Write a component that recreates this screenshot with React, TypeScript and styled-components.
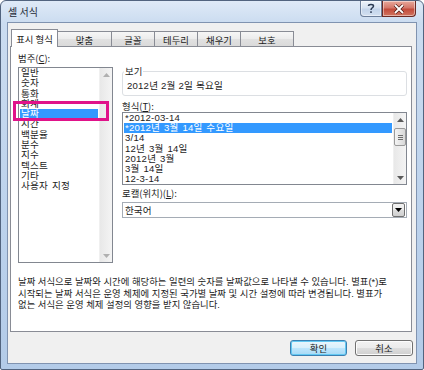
import React from "react";
import styled, { createGlobalStyle, css } from "styled-components";

const GlobalStyle = createGlobalStyle`
  html, body { margin: 0; padding: 0; background: #ffffff; }
  body {
    font-family: "Liberation Sans", "Noto Sans CJK KR", sans-serif;
    font-size: 9.4px;
    color: #1c1c1c;
  }
  * { box-sizing: border-box; }
`;

const Window = styled.div`
  width: 424px;
  height: 370px;
  display: flex;
  flex-direction: column;
  border: 1px solid #52647f;
  border-radius: 6px 6px 2px 2px;
  background: linear-gradient(180deg, #dfeaf7 0px, #cbdcf0 22px, #bcd2ec 60%, #b3cbe8 100%);
  padding: 0 6px 5px 6px;
`;

const TitleBar = styled.div`
  height: 21px;
  display: flex;
  align-items: flex-start;
  justify-content: space-between;
`;

const Title = styled.div`
  font-family: "Noto Sans CJK KR", sans-serif;
  font-size: 10px;
  line-height: 22px;
  color: #1e2a38;
  padding-left: 1px;
`;

const CaptionGroup = styled.div`
  display: flex;
  margin-right: 1px;
`;

const CaptionButton = styled.div<{ $close?: boolean }>`
  height: 16px;
  width: ${(p) => (p.$close ? "34px" : "22px")};
  display: flex;
  align-items: center;
  justify-content: center;
  border: 1px solid ${(p) => (p.$close ? "#6b2a24" : "#6d7f9a")};
  border-top: none;
  border-radius: ${(p) => (p.$close ? "0 0 4px 0" : "0 0 0 4px")};
  background: ${(p) =>
    p.$close
      ? "linear-gradient(180deg, #e9a99b 0%, #d4776a 45%, #c34b3b 55%, #d0745f 100%)"
      : "linear-gradient(180deg, #eef3fa 0%, #d6e2f1 45%, #c3d4ea 55%, #d3e0f0 100%)"};
  box-shadow: inset 0 0 0 1px rgba(255, 255, 255, 0.45);
`;

const Client = styled.div`
  flex: 1;
  display: flex;
  flex-direction: column;
  background: #f0f0f0;
  border: 1px solid #8093b0;
  padding: 6px 3px 0 2px;
`;

const TabRow = styled.div`
  display: flex;
  align-items: flex-end;
  height: 18px;
  padding-left: 1px;
  margin-bottom: -1px;
  position: relative;
  z-index: 2;
`;

const Tab = styled.div<{ $active?: boolean; $w: number }>`
  width: ${(p) => p.$w}px;
  display: flex;
  justify-content: center;
  font-family: "Noto Sans CJK KR", sans-serif;
  font-size: 9.4px;
  color: #1c1c1c;
  border: 1px solid #898c95;
  border-bottom: none;
  ${(p) =>
    p.$active
      ? css`
          height: 18px;
          background: #ffffff;
          padding-top: 4px;
          line-height: 11px;
        `
      : css`
          height: 15px;
          margin-bottom: 1px;
          margin-left: -1px;
          background: linear-gradient(180deg, #f6f6f6 0%, #ececec 50%, #e1e1e1 51%, #dadada 100%);
          padding-top: 3px;
          line-height: 11px;
        `}
`;

const Panel = styled.div`
  height: 286px;
  margin-right: 1px;
  background: #ffffff;
  border: 1px solid #898c95;
  padding: 6px 4px 0 7px;
  display: flex;
  flex-direction: column;
`;

const TopGrid = styled.div`
  display: grid;
  grid-template-columns: 95px 285px;
  column-gap: 9px;
`;

const Column = styled.div`
  display: flex;
  flex-direction: column;
`;

const FieldLabel = styled.div<{ $mt?: number }>`
  font-family: "Noto Sans CJK KR", sans-serif;
  font-size: 9.4px;
  line-height: 11px;
  height: 11px;
  margin-top: ${(p) => p.$mt ?? 0}px;
  color: #1c1c1c;
  u { text-decoration: underline; }
`;

const ListBox = styled.div<{ $h: number; $mt?: number }>`
  height: ${(p) => p.$h}px;
  margin-top: ${(p) => p.$mt ?? 0}px;
  border: 1px solid #828790;
  background: #ffffff;
  display: flex;
  position: relative;
`;

const Items = styled.div<{ $lh: number }>`
  flex: 1;
  padding: 0 1px;
  line-height: ${(p) => p.$lh}px;
  font-family: "Liberation Sans", "Noto Sans CJK KR", sans-serif;
  font-size: 9.6px;
  letter-spacing: 0.2px;
  word-spacing: 1px;
`;

const Item = styled.div<{ $sel?: boolean }>`
  padding-left: 1px;
  white-space: nowrap;
  color: ${(p) => (p.$sel ? "#ffffff" : "#1c1c1c")};
  background: ${(p) => (p.$sel ? "#3399ff" : "transparent")};
`;

const ScrollBar = styled.div`
  width: 13px;
  display: flex;
  flex-direction: column;
  background: linear-gradient(90deg, #e8e8e8 0%, #f4f4f4 100%);
  border-left: 1px solid #f0f0f0;
`;

const ScrollArrow = styled.div`
  height: 13px;
  display: flex;
  align-items: center;
  justify-content: center;
`;

const ScrollTrack = styled.div<{ $thumbTop?: number }>`
  flex: 1;
  display: flex;
  flex-direction: column;
  padding-top: ${(p) => p.$thumbTop ?? 0}px;
`;

const Thumb = styled.div`
  height: 18px;
  border: 1px solid #9a9a9a;
  border-radius: 2px;
  background: linear-gradient(90deg, #f4f4f4 0%, #e6e6e6 50%, #d8d8d8 100%);
  display: flex;
  flex-direction: column;
  align-items: center;
  justify-content: center;
  gap: 1px;
`;

const Grip = styled.div`
  width: 5px;
  height: 1px;
  background: #6e6e6e;
`;

const Highlight = styled.div`
  position: absolute;
  left: -6px;
  top: 33px;
  width: 96px;
  height: 20px;
  border: 3px solid #e0138a;
  pointer-events: none;
`;

const GroupBox = styled.div`
  margin-top: 18px;
  height: 25px;
  border: 1px solid #dcdfe3;
  border-radius: 3px;
  padding: 0 3px;
`;

const Legend = styled.div`
  width: fit-content;
  margin: -6px 0 0 -2px;
  padding: 0 1px;
  background: #ffffff;
  font-family: "Noto Sans CJK KR", sans-serif;
  font-size: 9.4px;
  line-height: 10px;
`;

const Preview = styled.div`
  margin-top: 4px;
  padding-left: 1px;
  line-height: 12px;
  font-size: 9.6px;
  letter-spacing: 0.2px;
  white-space: nowrap;
`;

const Combo = styled.div`
  margin-top: 3px;
  height: 16px;
  border: 1px solid #a5acb5;
  background: #ffffff;
  display: flex;
  align-items: center;
  padding: 0 1px 0 2px;
`;

const ComboText = styled.div`
  flex: 1;
  font-family: "Noto Sans CJK KR", sans-serif;
  font-size: 9.6px;
  line-height: 12px;
`;

const ComboButton = styled.div`
  width: 13px;
  height: 14px;
  border: 1px solid #707070;
  border-radius: 2px;
  background: linear-gradient(180deg, #f2f2f2 0%, #ebebeb 50%, #dddddd 51%, #cfcfcf 100%);
  display: flex;
  align-items: center;
  justify-content: center;
`;

const Description = styled.div`
  margin-top: 13px;
  font-family: "Liberation Sans", "Noto Sans CJK KR", sans-serif;
  font-size: 9.4px;
  line-height: 11.5px;
  color: #1c1c1c;
`;

const DescLine = styled.div`
  white-space: nowrap;
`;

const ButtonRow = styled.div`
  display: flex;
  justify-content: flex-end;
  gap: 8px;
  margin-top: 8px;
`;

const Button = styled.div<{ $default?: boolean; $w: number }>`
  width: ${(p) => p.$w}px;
  height: 16px;
  display: flex;
  align-items: center;
  justify-content: center;
  border-radius: 3px;
  font-family: "Noto Sans CJK KR", sans-serif;
  font-size: 9.4px;
  line-height: 12px;
  color: #1c1c1c;
  border: 1px solid ${(p) => (p.$default ? "#3c7fb1" : "#707070")};
  background: ${(p) =>
    p.$default
      ? "linear-gradient(180deg, #eaf6fd 0%, #d9f0fc 50%, #bee6fd 51%, #a7d9f5 100%)"
      : "linear-gradient(180deg, #f2f2f2 0%, #ebebeb 50%, #dddddd 51%, #cfcfcf 100%)"};
  box-shadow: inset 0 0 0 1px ${(p) => (p.$default ? "#63c9f3" : "#fcfcfc")};
`;

const Arrow = ({ up, color }: { up?: boolean; color: string }) => (
  <svg width="7" height="4" viewBox="0 0 7 4">
    {up ? (
      <polygon points="0,4 7,4 3.5,0" fill={color} />
    ) : (
      <polygon points="0,0 7,0 3.5,4" fill={color} />
    )}
  </svg>
);

const categories = [
  "일반",
  "숫자",
  "통화",
  "회계",
  "날짜",
  "시간",
  "백분율",
  "분수",
  "지수",
  "텍스트",
  "기타",
  "사용자 지정",
];

const formats = [
  "*2012-03-14",
  "*2012년 3월 14일 수요일",
  "3/14",
  "12년 3월 14일",
  "2012년 3월",
  "3월 14일",
  "12-3-14",
];

const tabs: { label: string; w: number }[] = [
  { label: "표시 형식", w: 47 },
  { label: "맞춤", w: 55 },
  { label: "글꼴", w: 44 },
  { label: "테두리", w: 44 },
  { label: "채우기", w: 44 },
  { label: "보호", w: 54 },
];

export default function App() {
  return (
    <>
      <GlobalStyle />
      <Window>
        <TitleBar>
          <Title>셀 서식</Title>
          <CaptionGroup>
            <CaptionButton>
              <svg width="8" height="11" viewBox="0 0 8 11">
                <path
                  d="M1.5 3 C1.5 1 6.5 1 6.5 3 C6.5 4.8 4 4.8 4 7"
                  stroke="#2b3a52"
                  strokeWidth="1.5"
                  fill="none"
                />
                <rect x="3.2" y="8.3" width="1.6" height="1.6" fill="#2b3a52" />
              </svg>
            </CaptionButton>
            <CaptionButton $close>
              <svg width="12" height="10" viewBox="0 0 12 10">
                <path d="M2 1 L10 9 M10 1 L2 9" stroke="#4a1a14" strokeWidth="3.2" />
                <path d="M2 1 L10 9 M10 1 L2 9" stroke="#ffffff" strokeWidth="1.8" />
              </svg>
            </CaptionButton>
          </CaptionGroup>
        </TitleBar>
        <Client>
          <TabRow>
            {tabs.map((t, i) => (
              <Tab key={t.label} $active={i === 0} $w={t.w}>
                {t.label}
              </Tab>
            ))}
          </TabRow>
          <Panel>
            <TopGrid>
              <Column>
                <FieldLabel>
                  범주(<u>C</u>):
                </FieldLabel>
                <ListBox $h={196} $mt={3}>
                  <Items $lh={10.3}>
                    {categories.map((c) => (
                      <Item key={c} $sel={c === "날짜"}>
                        {c}
                      </Item>
                    ))}
                  </Items>
                  <ScrollBar>
                    <ScrollArrow>
                      <Arrow up color="#b0b0b0" />
                    </ScrollArrow>
                    <ScrollTrack />
                    <ScrollArrow>
                      <Arrow color="#b0b0b0" />
                    </ScrollArrow>
                  </ScrollBar>
                  <Highlight />
                </ListBox>
              </Column>
              <Column>
                <GroupBox>
                  <Legend>보기</Legend>
                  <Preview>2012년 2월 2일 목요일</Preview>
                </GroupBox>
                <FieldLabel $mt={5}>
                  형식(<u>T</u>):
                </FieldLabel>
                <ListBox $h={73}>
                  <Items $lh={10.2}>
                    {formats.map((f, i) => (
                      <Item key={f} $sel={i === 1}>
                        {f}
                      </Item>
                    ))}
                  </Items>
                  <ScrollBar>
                    <ScrollArrow>
                      <Arrow up color="#5a5a5a" />
                    </ScrollArrow>
                    <ScrollTrack $thumbTop={2}>
                      <Thumb>
                        <Grip />
                        <Grip />
                        <Grip />
                      </Thumb>
                    </ScrollTrack>
                    <ScrollArrow>
                      <Arrow color="#5a5a5a" />
                    </ScrollArrow>
                  </ScrollBar>
                </ListBox>
                <FieldLabel $mt={3}>
                  로캘(위치)(<u>L</u>):
                </FieldLabel>
                <Combo>
                  <ComboText>한국어</ComboText>
                  <ComboButton>
                    <Arrow color="#000000" />
                  </ComboButton>
                </Combo>
              </Column>
            </TopGrid>
            <Description>
              <DescLine>
                날짜 서식으로 날짜와 시간에 해당하는 일련의 숫자를 날짜값으로 나타낼 수 있습니다. 별표(*)로
              </DescLine>
              <DescLine>
                시작되는 날짜 서식은 운영 체제에 지정된 국가별 날짜 및 시간 설정에 따라 변경됩니다. 별표가
              </DescLine>
              <DescLine>없는 서식은 운영 체제 설정의 영향을 받지 않습니다.</DescLine>
            </Description>
          </Panel>
          <ButtonRow>
            <Button $default $w={57}>
              확인
            </Button>
            <Button $w={58}>취소</Button>
          </ButtonRow>
        </Client>
      </Window>
    </>
  );
}
